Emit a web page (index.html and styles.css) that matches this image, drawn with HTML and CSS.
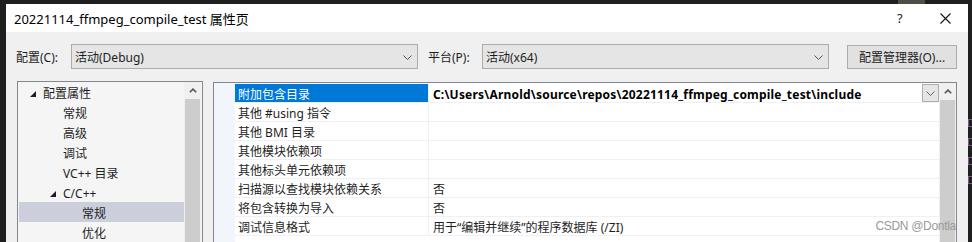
FILE: index.html
```html
<!DOCTYPE html>
<html lang="zh-CN">
<head>
    <meta charset="UTF-8">
    <title>20221114_ffmpeg_compile_test 属性页</title>
    <link rel="stylesheet" href="styles.css">
</head>
<body>
    <div class="topbar">
        <span class="taskbit"></span>
    </div>
    <div class="screen">
        <div class="dialog">
            <header class="titlebar">
                <span class="title">20221114_ffmpeg_compile_test 属性页</span>
                <span class="help">?</span>
                <span class="close">
                    <svg width="11" height="11" viewBox="0 0 11 11"><path d="M0.5 0.5L10.5 10.5M10.5 0.5L0.5 10.5" stroke="#111" stroke-width="1.1" fill="none"/></svg>
                </span>
            </header>

            <div class="content">
                <div class="config-row">
                    <label class="lbl lbl-config">配置(C):</label>
                    <div class="select">
                        <span>活动(Debug)</span>
                        <svg class="chev" width="9" height="5" viewBox="0 0 9 5"><path d="M0.5 0.5L4.5 4.5L8.5 0.5" stroke="#555" fill="none"/></svg>
                    </div>
                    <label class="lbl lbl-platform">平台(P):</label>
                    <div class="select">
                        <span>活动(x64)</span>
                        <svg class="chev" width="9" height="5" viewBox="0 0 9 5"><path d="M0.5 0.5L4.5 4.5L8.5 0.5" stroke="#555" fill="none"/></svg>
                    </div>
                    <button class="cfg-btn">配置管理器(O)...</button>
                </div>

                <div class="panes">
                    <div class="tree">
                        <ul class="tree-list">
                            <li class="lvl0"><i class="tri"></i>配置属性</li>
                            <li class="lvl1">常规</li>
                            <li class="lvl1">高级</li>
                            <li class="lvl1">调试</li>
                            <li class="lvl1">VC++ 目录</li>
                            <li class="lvl1 open"><i class="tri"></i>C/C++</li>
                            <li class="lvl2 selected">常规</li>
                            <li class="lvl2">优化</li>
                        </ul>
                        <div class="vscroll">
                            <div class="arrow">
                                <svg width="8" height="5" viewBox="0 0 8 5"><path d="M0.8 4.3L4 1.1L7.2 4.3" stroke="#555" stroke-width="1.6" fill="none"/></svg>
                            </div>
                            <div class="thumb"></div>
                        </div>
                    </div>

                    <div class="grid">
                        <div class="gutter"></div>
                        <div class="rows">
                            <div class="row">
                                <div class="name active">附加包含目录</div>
                                <div class="value strong">
                                    <span>C:\Users\Arnold\source\repos\20221114_ffmpeg_compile_test\include</span>
                                    <span class="drop">
                                        <svg width="9" height="5" viewBox="0 0 9 5"><path d="M0.5 0.5L4.5 4.5L8.5 0.5" stroke="#666" fill="none"/></svg>
                                    </span>
                                </div>
                            </div>
                            <div class="row"><div class="name">其他 #using 指令</div><div class="value"></div></div>
                            <div class="row"><div class="name">其他 BMI 目录</div><div class="value"></div></div>
                            <div class="row"><div class="name">其他模块依赖项</div><div class="value"></div></div>
                            <div class="row"><div class="name">其他标头单元依赖项</div><div class="value"></div></div>
                            <div class="row"><div class="name">扫描源以查找模块依赖关系</div><div class="value">否</div></div>
                            <div class="row"><div class="name">将包含转换为导入</div><div class="value">否</div></div>
                            <div class="row"><div class="name">调试信息格式</div><div class="value">用于“编辑并继续”的程序数据库 (/ZI)</div></div>
                        </div>
                        <div class="vscroll">
                            <div class="arrow">
                                <svg width="8" height="5" viewBox="0 0 8 5"><path d="M0.8 4.3L4 1.1L7.2 4.3" stroke="#555" stroke-width="1.6" fill="none"/></svg>
                            </div>
                            <div class="thumb"></div>
                        </div>
                        <span class="watermark">CSDN @Dontla</span>
                    </div>
                </div>
            </div>
        </div>

        <div class="edge">
            <i></i><i></i><i></i><i></i>
        </div>
    </div>
</body>
</html>
```

FILE: styles.css
```css
* {
    margin: 0;
    padding: 0;
    box-sizing: border-box;
}
body {
    width: 972px;
    height: 242px;
    overflow: hidden;
    background-color: #1f1f1f;
    font-family: "Noto Sans", "Noto Sans CJK SC", sans-serif;
    font-size: 12px;
    color: #1e1e1e;
}
.topbar {
    height: 4px;
    position: relative;
}
.taskbit {
    position: absolute;
    left: 898px;
    top: 0;
    width: 27px;
    height: 4px;
    background-color: #4a4f48;
}
.screen {
    display: flex;
    height: 238px;
    padding-left: 6px;
}
.dialog {
    width: 962px;
    background-color: #f0f0f0;
    display: flex;
    flex-direction: column;
}

/* title bar */
.titlebar {
    height: 30px;
    background-color: #fff;
    display: flex;
    align-items: center;
    padding-left: 8px;
}
.title {
    flex: 1;
    font-size: 13px;
    color: #000;
}
.help {
    width: 12px;
    font-size: 13px;
    color: #222;
    margin-right: 31px;
}
.close {
    display: flex;
    margin-right: 17px;
}

/* config row */
.content {
    flex: 1;
    padding: 12px 11px 0 11px;
    display: flex;
    flex-direction: column;
}
.config-row {
    display: flex;
    align-items: center;
    height: 25px;
}
.lbl {
    color: #1e1e1e;
    padding-top: 1px;
}
.lbl-config {
    width: 55px;
    margin-left: -1px;
}
.lbl-platform {
    width: 54px;
    margin-left: 10px;
}
.select {
    width: 347px;
    height: 25px;
    background-color: #e5e5e5;
    border: 1px solid #acacac;
    display: flex;
    align-items: center;
    justify-content: space-between;
    padding: 1px 5px 0 3px;
}
.cfg-btn {
    width: 110px;
    height: 24px;
    margin-left: auto;
    background-color: #e1e1e1;
    border: 1px solid #adadad;
    font-family: inherit;
    font-size: 12px;
    color: #1e1e1e;
}

/* panes */
.panes {
    flex: 1;
    display: flex;
    margin-top: 12px;
    gap: 10px;
    overflow: hidden;
}
.tree {
    width: 186px;
    border: 1px solid #828790;
    border-bottom: none;
    background-color: #f5f5f5;
    display: flex;
    padding-left: 1px;
}
.tree-list {
    list-style: none;
    flex: 1;
}
.tree-list li {
    height: 20px;
    padding-top: 3px;
    line-height: 19px;
    display: flex;
    align-items: center;
    white-space: nowrap;
}
.lvl0 {
    padding-left: 10px;
}
.lvl1 {
    padding-left: 44px;
}
.lvl1.open {
    padding-left: 30px;
}
.lvl2 {
    padding-left: 63px;
}
.selected {
    background-color: #cccedb;
}
.tri {
    width: 0;
    height: 0;
    border-right: 6px solid #1e1e1e;
    border-top: 6px solid transparent;
    margin-right: 7px;
    margin-left: 1px;
}
.vscroll {
    width: 17px;
    background-color: #f0f0f0;
    display: flex;
    flex-direction: column;
    flex-shrink: 0;
}
.tree .vscroll {
    margin-right: 1px;
}
.arrow {
    height: 17px;
    display: flex;
    align-items: center;
    justify-content: center;
}
.thumb {
    flex: 1;
    background-color: #cdcdcd;
    margin: 0 1px;
}

/* property grid */
.grid {
    width: 744px;
    margin-top: 1px;
    border: 1px solid #828790;
    border-bottom: none;
    background-color: #fff;
    display: flex;
    position: relative;
}
.gutter {
    width: 21px;
    background-color: #f2f5fb;
}
.rows {
    width: 705px;
    padding-top: 1px;
}
.row {
    display: flex;
    height: 19px;
    border-bottom: 1px solid #eef0f5;
}
.name {
    width: 194px;
    padding: 3px 0 0 3px;
    line-height: 15px;
    border-right: 1px solid #eef0f5;
    white-space: nowrap;
}
.name.active {
    background-color: #0078d7;
    color: #fff;
}
.value {
    flex: 1;
    padding: 3px 0 0 4px;
    line-height: 15px;
    display: flex;
    justify-content: space-between;
    white-space: nowrap;
}
.strong {
    font-weight: bold;
    color: #000;
    letter-spacing: 0.2px;
}
.drop {
    width: 17px;
    height: 18px;
    margin-top: -3px;
    background-color: #e5e5e5;
    border: 1px solid #adadad;
    display: flex;
    align-items: center;
    justify-content: center;
}
.watermark {
    position: absolute;
    right: 0;
    top: 136px;
    color: #9a9a9a;
    font-family: "Liberation Sans", sans-serif;
    font-size: 12px;
    letter-spacing: -0.3px;
}

/* background app edge */
.edge {
    width: 4px;
    display: flex;
    flex-direction: column;
    gap: 11px;
    padding-top: 115px;
}
.edge i {
    height: 8px;
    border: 1px solid #7d5a8e;
    border-right: none;
}
```
